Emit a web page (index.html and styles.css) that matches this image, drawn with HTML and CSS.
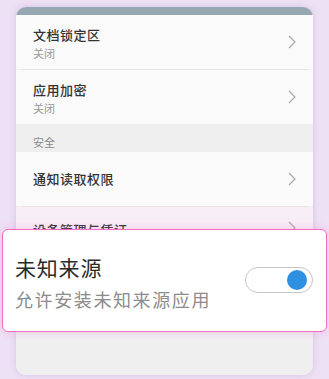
FILE: index.html
```html
<!DOCTYPE html>
<html lang="zh">
<head>
<meta charset="utf-8">
<link rel="stylesheet" href="styles.css">
</head>
<body>
<div class="card">
  <div class="strip"></div>
  <div class="row two">
    <div class="texts">
      <div class="title">文档锁定区</div>
      <div class="sub">关闭</div>
    </div>
    <svg class="chev" viewBox="0 0 8 14" width="8" height="14"><path d="M1 1 L7 7 L1 13" fill="none" stroke="#a8a8a8" stroke-width="1.2"/></svg>
  </div>
  <div class="divider"></div>
  <div class="row two">
    <div class="texts">
      <div class="title">应用加密</div>
      <div class="sub">关闭</div>
    </div>
    <svg class="chev" viewBox="0 0 8 14" width="8" height="14"><path d="M1 1 L7 7 L1 13" fill="none" stroke="#a8a8a8" stroke-width="1.2"/></svg>
  </div>
  <div class="section">安全</div>
  <div class="row one">
    <div class="title">通知读取权限</div>
    <svg class="chev" viewBox="0 0 8 14" width="8" height="14"><path d="M1 1 L7 7 L1 13" fill="none" stroke="#a8a8a8" stroke-width="1.2"/></svg>
  </div>
  <div class="divider"></div>
  <div class="row one last">
    <div class="title">设备管理与凭证</div>
    <svg class="chev" viewBox="0 0 8 14" width="8" height="14"><path d="M1 1 L7 7 L1 13" fill="none" stroke="#a8a8a8" stroke-width="1.2"/></svg>
  </div>
  <div class="rest"></div>
</div>
<div class="popup">
  <div class="ptexts">
    <div class="ptitle">未知来源</div>
    <div class="psub">允许安装未知来源应用</div>
  </div>
  <div class="toggle"><div class="knob"></div></div>
</div>
</body>
</html>
```
FILE: styles.css
```css
html, body {
  margin: 0;
  padding: 0;
}
body {
  width: 329px;
  height: 379px;
  background: #ede1f5;
  font-family: "Noto Sans CJK SC", "Noto Sans", sans-serif;
  overflow: hidden;
  position: relative;
  padding-top: 7px;
  box-sizing: border-box;
}
.card {
  margin-left: 16px;
  width: 297px;
  height: 368px;
  border-radius: 10px;
  overflow: hidden;
  background: #f0eff0;
  box-shadow: 0 0 6px rgba(200, 170, 215, 0.6);
  display: flex;
  flex-direction: column;
}
.strip {
  height: 8px;
  background: #98a8b2;
  flex: none;
}
.row {
  background: #fafafa;
  display: flex;
  align-items: center;
  justify-content: space-between;
  padding: 0 17px 0 17px;
  flex: none;
  height: 54px;
}
.row.two .texts {
  padding-top: 2px;
}
.title {
  font-size: 13px;
  font-weight: 500;
  letter-spacing: 0.5px;
  color: #333;
  line-height: 18px;
}
.sub {
  font-size: 11px;
  color: #999;
  line-height: 16px;
  margin-top: 1px;
}
.divider {
  height: 1px;
  background: #e4e4e4;
  margin: 0 6px;
  flex: none;
}
.section {
  height: 28px;
  background: #efefef;
  font-size: 11px;
  color: #8a8a8a;
  line-height: 14px;
  padding: 11px 17px 0;
  box-sizing: border-box;
  flex: none;
}
.row.last {
  background: #f8eef6;
  align-items: flex-start;
  padding-top: 14px;
  box-sizing: border-box;
}
.rest {
  flex: 1;
  background: linear-gradient(#f5e8f2, #efeef0 30px, #efefef);
}
.popup {
  position: absolute;
  left: 2px;
  top: 229px;
  width: 325px;
  height: 103px;
  box-sizing: border-box;
  background: #fff;
  border: 1.5px solid #f26cc2;
  border-radius: 6px;
  box-shadow: 0 0 10px rgba(240, 120, 200, 0.35);
  display: flex;
  align-items: center;
  justify-content: space-between;
  padding: 0 13px 0 12px;
}
.ptexts {
  padding-top: 2px;
}
.ptitle {
  font-size: 21px;
  line-height: 28px;
  color: #2a2a2a;
  letter-spacing: 0.8px;
}
.psub {
  font-size: 18px;
  line-height: 24px;
  color: #8c8c8c;
  letter-spacing: 1.6px;
  margin-top: 6px;
}
.toggle {
  width: 68px;
  height: 26px;
  box-sizing: border-box;
  border: 1.5px solid #c4c4c4;
  border-radius: 13px;
  background: #fff;
  display: flex;
  align-items: center;
  justify-content: flex-end;
  padding-right: 5px;
  margin-top: -2px;
}
.knob {
  width: 20px;
  height: 20px;
  border-radius: 50%;
  background: #2f8fe0;
}
```
